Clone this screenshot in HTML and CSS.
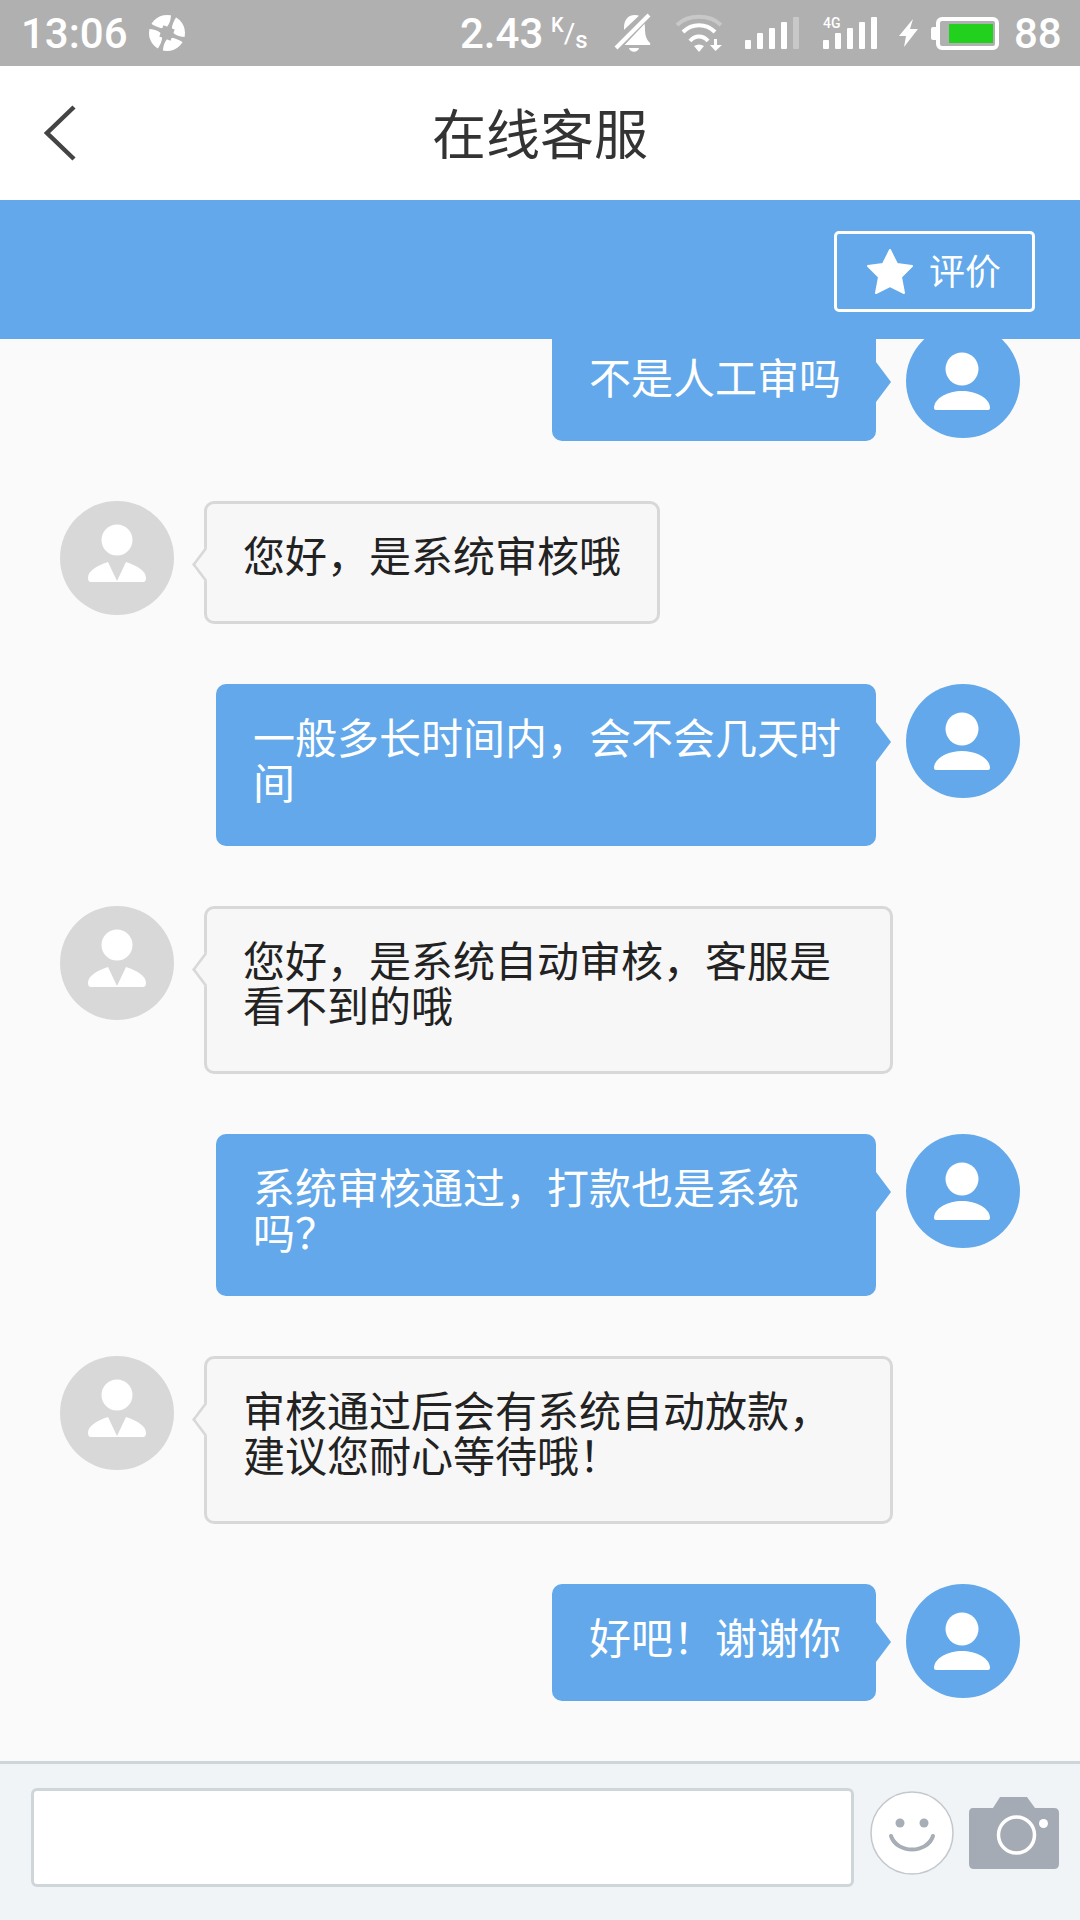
FILE: index.html

```html
<!DOCTYPE html>
<html lang="zh-CN">
<head>
    <meta charset="UTF-8">
    <meta name="viewport" content="width=device-width, initial-scale=1.0">
    <title>在线客服</title>
    <link rel="stylesheet" href="styles.css">
</head>
<body>
    <div class="app">
        <div class="status-bar">
            <span class="time">13:06</span>
            <svg class="sync-icon" width="36" height="36" viewBox="0 0 36 36">
                <circle cx="18" cy="18" r="18" fill="#fff"/>
                <rect x="12" y="12" width="12" height="12" transform="rotate(20 18 18)" fill="#b0b0b0"/>
                <path id="blade" d="M13 15 C19 13 22 7 22 -1 L28 1 C24 7 22 12 23 18Z" fill="#b0b0b0"/>
                <path d="M13 15 C19 13 22 7 22 -1 L28 1 C24 7 22 12 23 18Z" fill="#b0b0b0" transform="rotate(90 18 18)"/>
                <path d="M13 15 C19 13 22 7 22 -1 L28 1 C24 7 22 12 23 18Z" fill="#b0b0b0" transform="rotate(180 18 18)"/>
                <path d="M13 15 C19 13 22 7 22 -1 L28 1 C24 7 22 12 23 18Z" fill="#b0b0b0" transform="rotate(270 18 18)"/>
            </svg>
            <span class="speed">2.43</span>
            <span class="speed-unit"><sup>K</sup>/<sub>s</sub></span>
            <svg class="bell-icon" width="38" height="40" viewBox="0 0 38 40">
                <path d="M21 2 C13 2 10 8 10 15 C10 21 9 25 5 29 L5 32 H35 Q37 32 36 30 C32 26 31 22 31 15 C31 8 28 2 21 2Z" fill="#fff"/>
                <path d="M15 35 H25 C24 40 16 40 15 35Z" fill="#fff"/>
                <path d="M37 4 L4 39 L-4 39 L-4 30 L30 -2Z" fill="#b0b0b0"/>
                <path d="M35 2 L2 35" stroke="#fff" stroke-width="4"/>
                <path d="M14 32 H22 L19 29Z" fill="#fff"/>
            </svg>
            <svg class="wifi-icon" width="46" height="40" viewBox="0 0 46 40">
                <path d="M1 12 C12 1 34 1 45 12" fill="none" stroke="#c8c8c8" stroke-width="4"/>
                <path d="M7 19 C16 10 30 10 39 19" fill="none" stroke="#fff" stroke-width="4"/>
                <path d="M14 28 C19 22 27 22 32 28" fill="none" stroke="#fff" stroke-width="4"/>
                <path d="M18 33 Q23 30 28 33 L23 39Z" fill="#fff"/>
                <path d="M38 26 H41 V32 H46 L39.5 38 L34 32 H38Z" fill="#fff"/>
            </svg>
            <svg class="signal-icon" width="56" height="32" viewBox="0 0 56 32">
                <rect x="0" y="23" width="6" height="9" rx="1" fill="#fff"/>
                <rect x="12" y="16" width="6" height="16" rx="1" fill="#fff"/>
                <rect x="24" y="11" width="6" height="21" rx="1" fill="#fff"/>
                <rect x="36" y="5" width="6" height="27" rx="1" fill="#fff"/>
                <rect x="48" y="0" width="6" height="32" rx="1" fill="#c8c8c8"/>
            </svg>
            <div class="signal-4g">
                <span class="net-label">4G</span>
                <svg width="56" height="32" viewBox="0 0 56 32">
                    <rect x="0" y="23" width="6" height="9" rx="1" fill="#fff"/>
                    <rect x="12" y="16" width="6" height="16" rx="1" fill="#fff"/>
                    <rect x="24" y="11" width="6" height="21" rx="1" fill="#fff"/>
                    <rect x="36" y="5" width="6" height="27" rx="1" fill="#fff"/>
                    <rect x="48" y="0" width="6" height="32" rx="1" fill="#fff"/>
                </svg>
            </div>
            <svg class="bolt-icon" width="20" height="28" viewBox="0 0 20 28">
                <path d="M14 0 L0 17 H7 L5 28 L19 10 H11Z" fill="#fff"/>
            </svg>
            <div class="battery">
                <div class="battery-level"></div>
            </div>
            <span class="battery-text">88</span>
        </div>

        <div class="header">
            <svg class="back-icon" width="34" height="58" viewBox="0 0 34 58">
                <path d="M31 3 L4 29 L31 55" fill="none" stroke="#444" stroke-width="4.5"/>
            </svg>
            <h1>在线客服</h1>
        </div>

        <div class="toolbar">
            <button class="rate-btn">
                <svg width="46" height="45" viewBox="0 0 46 45">
                    <path d="M23 1 L30 15 L45 17 L34 28 L37 44 L23 37 L9 44 L12 28 L1 17 L16 15Z" fill="#fff" stroke="#fff" stroke-width="2" stroke-linejoin="round"/>
                </svg>
                <span class="rate-label">评价</span>
            </button>
        </div>

        <div class="messages">
            <div class="msg me first">
                <div class="bubble">不是人工审吗</div>
                <svg class="avatar" viewBox="0 0 114 114"><circle cx="57" cy="57" r="57" fill="#62a8ea"/><circle cx="56" cy="45" r="16.5" fill="#fff"/><path d="M28 84 C28 74 42 67 56 67 S84 74 84 84 Q84 86 82 86 H30 Q28 86 28 84Z" fill="#fff"/></svg>
            </div>
            <div class="msg agent">
                <svg class="avatar" viewBox="0 0 114 114"><circle cx="57" cy="57" r="57" fill="#d8d8d8"/><circle cx="57" cy="39" r="15.5" fill="#fff"/><path d="M28 77 C28 70 36 65 48 61 L57 80 L66 61 C78 65 86 70 86 77 Q86 81 83 81 H31 Q28 81 28 77Z" fill="#fff"/></svg>
                <div class="bubble">您好，是系统审核哦</div>
            </div>
            <div class="msg me">
                <div class="bubble">一般多长时间内，会不会几天时间</div>
                <svg class="avatar" viewBox="0 0 114 114"><circle cx="57" cy="57" r="57" fill="#62a8ea"/><circle cx="56" cy="45" r="16.5" fill="#fff"/><path d="M28 84 C28 74 42 67 56 67 S84 74 84 84 Q84 86 82 86 H30 Q28 86 28 84Z" fill="#fff"/></svg>
            </div>
            <div class="msg agent">
                <svg class="avatar" viewBox="0 0 114 114"><circle cx="57" cy="57" r="57" fill="#d8d8d8"/><circle cx="57" cy="39" r="15.5" fill="#fff"/><path d="M28 77 C28 70 36 65 48 61 L57 80 L66 61 C78 65 86 70 86 77 Q86 81 83 81 H31 Q28 81 28 77Z" fill="#fff"/></svg>
                <div class="bubble">您好，是系统自动审核，客服是看不到的哦</div>
            </div>
            <div class="msg me">
                <div class="bubble">系统审核通过，打款也是系统吗？</div>
                <svg class="avatar" viewBox="0 0 114 114"><circle cx="57" cy="57" r="57" fill="#62a8ea"/><circle cx="56" cy="45" r="16.5" fill="#fff"/><path d="M28 84 C28 74 42 67 56 67 S84 74 84 84 Q84 86 82 86 H30 Q28 86 28 84Z" fill="#fff"/></svg>
            </div>
            <div class="msg agent">
                <svg class="avatar" viewBox="0 0 114 114"><circle cx="57" cy="57" r="57" fill="#d8d8d8"/><circle cx="57" cy="39" r="15.5" fill="#fff"/><path d="M28 77 C28 70 36 65 48 61 L57 80 L66 61 C78 65 86 70 86 77 Q86 81 83 81 H31 Q28 81 28 77Z" fill="#fff"/></svg>
                <div class="bubble">审核通过后会有系统自动放款，建议您耐心等待哦！</div>
            </div>
            <div class="msg me">
                <div class="bubble">好吧！谢谢你</div>
                <svg class="avatar" viewBox="0 0 114 114"><circle cx="57" cy="57" r="57" fill="#62a8ea"/><circle cx="56" cy="45" r="16.5" fill="#fff"/><path d="M28 84 C28 74 42 67 56 67 S84 74 84 84 Q84 86 82 86 H30 Q28 86 28 84Z" fill="#fff"/></svg>
            </div>
        </div>

        <div class="input-bar">
            <div class="text-input"></div>
            <svg class="smile-icon" width="84" height="84" viewBox="0 0 84 84">
                <circle cx="42" cy="42" r="41" fill="#fff" stroke="#c4c8cc" stroke-width="1.5"/>
                <circle cx="30" cy="32" r="4.5" fill="#a8aeb5"/>
                <circle cx="54" cy="32" r="4.5" fill="#a8aeb5"/>
                <path d="M21 45 C27 63 57 63 63 45" fill="none" stroke="#a8aeb5" stroke-width="4" stroke-linecap="round"/>
            </svg>
            <svg class="camera-icon" width="90" height="72" viewBox="0 0 90 72">
                <path d="M4 11 H24 L31 0 H58 L66 11 H85 Q90 11 90 16 V67 Q90 72 85 72 H5 Q0 72 0 67 V16 Q0 11 4 11Z" fill="#a5abb4"/>
                <circle cx="47.5" cy="38" r="18" fill="#a5abb4" stroke="#fff" stroke-width="3.5"/>
                <circle cx="74.5" cy="26.5" r="4.5" fill="#fff"/>
            </svg>
        </div>
    </div>
</body>
</html>
```

FILE: styles.css

```css
* {
    margin: 0;
    padding: 0;
    box-sizing: border-box;
}

body {
    font-family: "Noto Sans CJK SC", "Noto Sans", sans-serif;
    background: #fafafa;
}

.app {
    width: 1080px;
    height: 1920px;
    display: flex;
    flex-direction: column;
    overflow: hidden;
}

/* status bar */
.status-bar {
    height: 66px;
    background: #b0b0b0;
    color: #fff;
    font-family: Roboto, sans-serif;
    font-weight: 500;
    display: flex;
    align-items: center;
    padding-left: 21px;
    flex-shrink: 0;
}

.time {
    font-size: 42px;
    width: 126px;
}

.sync-icon {
    margin-left: 2px;
}

.speed {
    font-size: 42px;
    margin-left: 275px;
    width: 88px;
}

.speed-unit {
    width: 37px;
    font-size: 28px;
    font-weight: 400;
    margin-left: 3px;
    white-space: nowrap;
}

.speed-unit sup {
    font-size: 20px;
    font-weight: 500;
    line-height: 0;
    vertical-align: 11px;
}

.speed-unit sub {
    font-size: 24px;
    font-weight: 500;
    line-height: 0;
    vertical-align: -5px;
}

.bell-icon {
    margin-left: 26px;
}

.wifi-icon {
    margin-left: 24px;
}

.signal-icon {
    margin-left: 23px;
}

.signal-4g {
    margin-left: 22px;
    position: relative;
}

.signal-4g svg {
    display: block;
}

.net-label {
    position: absolute;
    left: 0;
    top: 0;
    font-size: 14px;
    line-height: 12px;
}

.bolt-icon {
    margin-left: 20px;
}

.battery {
    width: 63px;
    height: 33px;
    margin-left: 17px;
    border: 4px solid #fff;
    border-radius: 6px;
    padding: 3px 2px;
    position: relative;
}

.battery::before {
    content: "";
    position: absolute;
    left: -9px;
    top: 6px;
    width: 5px;
    height: 13px;
    background: #fff;
    border-radius: 2px 0 0 2px;
}

.battery-level {
    width: 44px;
    height: 100%;
    background: #22d01e;
    margin-left: auto;
}

.battery-text {
    font-size: 42px;
    margin-left: 15px;
}

/* header */
.header {
    height: 134px;
    background: #fff;
    display: flex;
    align-items: center;
    justify-content: center;
    padding-bottom: 4px;
    position: relative;
    flex-shrink: 0;
}

.header h1 {
    font-size: 54px;
    font-weight: 400;
    color: #333;
}

.back-icon {
    position: absolute;
    left: 43px;
    top: 38px;
}

.toolbar {
    height: 139px;
    background: #62a8ea;
    display: flex;
    justify-content: flex-end;
    align-items: flex-start;
    padding: 31px 45px 0 0;
    flex-shrink: 0;
    position: relative;
    z-index: 1;
}

.rate-btn {
    width: 201px;
    height: 81px;
    background: transparent;
    border: 3px solid #fff;
    border-radius: 5px;
    color: #fff;
    font-family: inherit;
    font-size: 36px;
    display: flex;
    align-items: center;
    gap: 16px;
    padding-left: 30px;
}

.rate-label {
    padding-bottom: 6px;
}

/* chat */
.messages {
    flex: 1;
    display: flex;
    flex-direction: column;
    gap: 60px;
    overflow: hidden;
}

.msg {
    display: flex;
    align-items: flex-start;
    flex-shrink: 0;
}

.msg.first {
    margin-top: -15px;
}

.msg.me {
    justify-content: flex-end;
    padding-right: 60px;
}

.msg.agent {
    padding-left: 60px;
}

.avatar {
    width: 114px;
    height: 114px;
    flex-shrink: 0;
}

.bubble {
    font-size: 42px;
    line-height: 45px;
    position: relative;
}

.me .bubble {
    background: #62a8ea;
    color: #fff;
    max-width: 660px;
    margin-right: 30px;
    padding: 29px 35px 43px 37px;
    border-radius: 10px;
}

.me.first .bubble {
    border-radius: 0 0 10px 10px;
}

.me .bubble::after {
    content: "";
    position: absolute;
    right: -15px;
    top: 38px;
    border-left: 15px solid #62a8ea;
    border-top: 20px solid transparent;
    border-bottom: 20px solid transparent;
}

.agent .bubble {
    background: #f7f7f7;
    color: #222;
    max-width: 689px;
    margin-left: 30px;
    padding: 27px 36px 45px;
    border: 3px solid #d8d8d8;
    border-radius: 10px;
}

.agent .bubble::before {
    content: "";
    position: absolute;
    left: -14px;
    top: 48px;
    width: 22px;
    height: 22px;
    background: #f7f7f7;
    border-left: 3px solid #d8d8d8;
    border-bottom: 3px solid #d8d8d8;
    transform: scaleX(0.75) rotate(45deg);
}

/* input */
.input-bar {
    height: 159px;
    background: #f0f4f7;
    border-top: 3px solid #cfd6da;
    display: flex;
    align-items: flex-start;
    padding: 24px 21px 0 31px;
    flex-shrink: 0;
}

.text-input {
    width: 823px;
    height: 99px;
    background: #fff;
    border: 3px solid #cfd6da;
    border-radius: 6px;
}

.smile-icon {
    margin: 3px 0 0 16px;
}

.camera-icon {
    margin: 9px 0 0 15px;
}
```
